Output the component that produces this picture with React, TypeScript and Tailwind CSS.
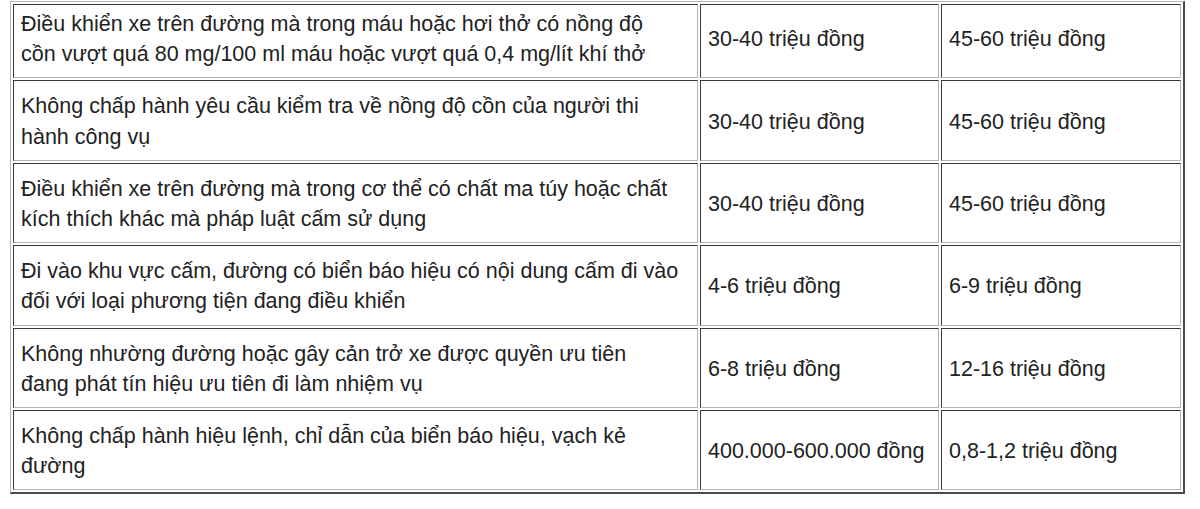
import React from 'react';

type Row = {
  violation: string[];
  car: string;
  other: string;
};

const rows: Row[] = [
  {
    violation: [
      'Điều khiển xe trên đường mà trong máu hoặc hơi thở có nồng độ',
      'cồn vượt quá 80 mg/100 ml máu hoặc vượt quá 0,4 mg/lít khí thở',
    ],
    car: '30-40 triệu đồng',
    other: '45-60 triệu đồng',
  },
  {
    violation: [
      'Không chấp hành yêu cầu kiểm tra về nồng độ cồn của người thi',
      'hành công vụ',
    ],
    car: '30-40 triệu đồng',
    other: '45-60 triệu đồng',
  },
  {
    violation: [
      'Điều khiển xe trên đường mà trong cơ thể có chất ma túy hoặc chất',
      'kích thích khác mà pháp luật cấm sử dụng',
    ],
    car: '30-40 triệu đồng',
    other: '45-60 triệu đồng',
  },
  {
    violation: [
      'Đi vào khu vực cấm, đường có biển báo hiệu có nội dung cấm đi vào',
      'đối với loại phương tiện đang điều khiển',
    ],
    car: '4-6 triệu đồng',
    other: '6-9 triệu đồng',
  },
  {
    violation: [
      'Không nhường đường hoặc gây cản trở xe được quyền ưu tiên',
      'đang phát tín hiệu ưu tiên đi làm nhiệm vụ',
    ],
    car: '6-8 triệu đồng',
    other: '12-16 triệu đồng',
  },
  {
    violation: [
      'Không chấp hành hiệu lệnh, chỉ dẫn của biển báo hiệu, vạch kẻ',
      'đường',
    ],
    car: '400.000-600.000 đồng',
    other: '0,8-1,2 triệu đồng',
  },
];

const cell =
  'border border-t-[#3a3a3a] border-l-[#3a3a3a] border-r-[#b4b4b4] border-b-[#b4b4b4] px-[7px] align-middle whitespace-nowrap overflow-visible';

export default function App() {
  return (
    <div className="w-[1200px] h-[509px] bg-white overflow-hidden font-['Liberation_Sans',Arial,sans-serif] text-[21.5px] leading-[30.2px] text-[#222]">
      <table className="ml-[10px] mt-[1px] w-[1174px] table-fixed border-separate border-spacing-[2px] border border-t-[#b8b8b8] border-l-[#b8b8b8] border-r-[#4a4a4a] border-b-[#4a4a4a] border-r-2 border-b-2">
        <colgroup>
          <col className="w-[685px]" />
          <col className="w-[239px]" />
          <col className="w-[240px]" />
        </colgroup>
        <tbody>
          {rows.map((row, i) => {
            const pad = i === 0 ? 'pt-[4px] pb-[8px]' : 'pt-[10px] pb-[8px]';
            return (
              <tr key={i}>
                <td className={`${cell} ${pad}`}>
                  {row.violation.map((line, j) => (
                    <div key={j}>{line}</div>
                  ))}
                </td>
                <td className={`${cell} ${pad}`}>{row.car}</td>
                <td className={`${cell} ${pad}`}>{row.other}</td>
              </tr>
            );
          })}
        </tbody>
      </table>
    </div>
  );
}
